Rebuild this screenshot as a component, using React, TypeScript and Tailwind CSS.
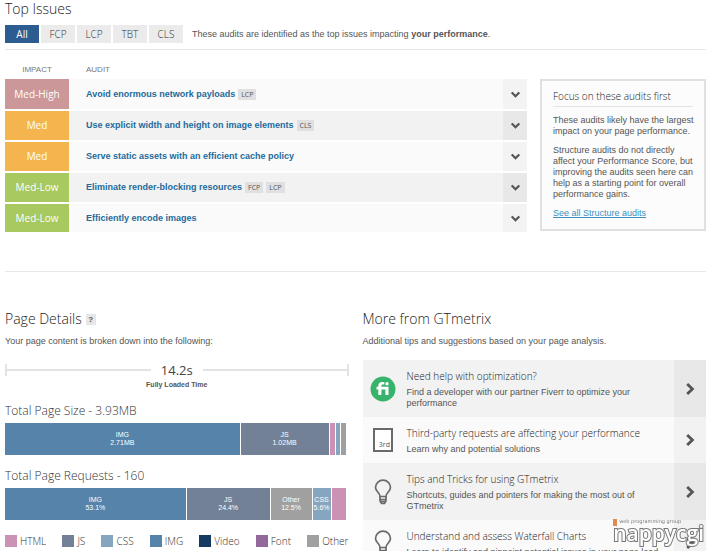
import type { ReactNode } from 'react'
import clsx from 'clsx'

const tabs = ['All', 'FCP', 'LCP', 'TBT', 'CLS']

const audits = [
  { impact: 'Med-High', color: 'bg-[#cb9799]', title: 'Avoid enormous network payloads', tags: ['LCP'] },
  { impact: 'Med', color: 'bg-[#f5b54e]', title: 'Use explicit width and height on image elements', tags: ['CLS'] },
  { impact: 'Med', color: 'bg-[#f5b54e]', title: 'Serve static assets with an efficient cache policy', tags: [] },
  { impact: 'Med-Low', color: 'bg-[#a7c95f]', title: 'Eliminate render-blocking resources', tags: ['FCP', 'LCP'] },
  { impact: 'Med-Low', color: 'bg-[#a7c95f]', title: 'Efficiently encode images', tags: [] },
]

const sizeParts = [
  { name: 'IMG', value: '2.71MB', share: 235, color: 'bg-[#5583a9]' },
  { name: 'JS', value: '1.02MB', share: 88, color: 'bg-[#728196]' },
  { name: '', value: '', share: 5, color: 'bg-[#cc92b6]' },
  { name: '', value: '', share: 4, color: 'bg-[#86a5be]' },
  { name: '', value: '', share: 5, color: 'bg-[#a0a0a0]' },
]

const requestParts = [
  { name: 'IMG', value: '53.1%', share: 181, color: 'bg-[#5583a9]' },
  { name: 'JS', value: '24.4%', share: 83, color: 'bg-[#728196]' },
  { name: 'Other', value: '12.5%', share: 41, color: 'bg-[#a0a0a0]' },
  { name: 'CSS', value: '5.6%', share: 18, color: 'bg-[#86a5be]' },
  { name: '', value: '', share: 14, color: 'bg-[#cc92b6]' },
]

const legend = [
  { name: 'HTML', color: 'bg-[#cc92b6]' },
  { name: 'JS', color: 'bg-[#728196]' },
  { name: 'CSS', color: 'bg-[#86a5be]' },
  { name: 'IMG', color: 'bg-[#5583a9]' },
  { name: 'Video', color: 'bg-[#163b62]' },
  { name: 'Font', color: 'bg-[#93699c]' },
  { name: 'Other', color: 'bg-[#a0a0a0]' },
]

function Chevron({ className }: { className: string }) {
  return (
    <svg viewBox="0 0 12 12" className={className} fill="none" stroke="#555" strokeWidth="2.8">
      <path d="M3.2 1 8.4 6 3.2 11" />
    </svg>
  )
}

function Bulb() {
  return (
    <svg viewBox="0 0 18 26" className="h-[26px] w-[18px]" fill="none" stroke="#6a6a6a" strokeWidth="1.7">
      <path d="M6 17.500C6 13.500 1.500 12.500 1.500 8.500a7.500 7.300 0 0 1 15 0c0 4-4.500 5-4.500 9z" />
      <path d="M6 17.500v4.200L7.500 24.500h3L12 21.700v-4.200" />
      <path d="M6 20.500h6M6.500 22.700h5" />
    </svg>
  )
}

function Fiverr() {
  return (
    <svg viewBox="0 0 26 26" className="h-[26px] w-[26px]">
      <circle cx="13" cy="13" r="12.500" fill="#37b36b" />
      <path
        d="M6.500 10.800h1.800V9.800C8.300 7.400 9.800 6 12.300 6h2v2.600h-1.500c-1 0-1.400.4-1.400 1.200v1h7.100V19h-3.100v-5.500h-4V19H8.300v-5.500H6.500z"
        fill="#fff"
      />
      <circle cx="17" cy="7.700" r="1.700" fill="#fff" />
    </svg>
  )
}

function ThirdParty() {
  return (
    <span className="flex h-6 w-5 items-end justify-end border-2 border-[#6a6a6a] bg-white pr-px pb-px font-['Open_Sans',sans-serif] text-[7px] leading-[9px]">
      3rd
    </span>
  )
}

const tips: { icon: ReactNode; title: string; text: string }[] = [
  { icon: <Fiverr />, title: 'Need help with optimization?', text: 'Find a developer with our partner Fiverr to optimize your performance' },
  { icon: <ThirdParty />, title: 'Third-party requests are affecting your performance', text: 'Learn why and potential solutions' },
  { icon: <Bulb />, title: 'Tips and Tricks for using GTmetrix', text: 'Shortcuts, guides and pointers for making the most out of GTmetrix' },
  { icon: <Bulb />, title: 'Understand and assess Waterfall Charts', text: 'Learn to identify and pinpoint potential issues in your page load' },
]

function Heading({ children }: { children: ReactNode }) {
  return <h2 className="font-['Open_Sans',sans-serif] text-[14px] leading-4 font-light text-[#222]">{children}</h2>
}

function Bar({ title, parts }: { title: string; parts: typeof sizeParts }) {
  return (
    <section>
      <h3 className="mb-1 font-['Open_Sans',sans-serif] text-[12px] leading-4 font-light text-[#333]">{title}</h3>
      <div className="mr-[3px] flex h-8 gap-px">
        {parts.map((part, i) => (
          <div
            key={i}
            className={clsx('flex min-w-0 basis-0 flex-col items-center justify-center text-[7px] leading-[8px] text-white', part.color)}
            style={{ flexGrow: part.share }}
          >
            <span>{part.name}</span>
            <span>{part.value}</span>
          </div>
        ))}
      </div>
    </section>
  )
}

export default function App() {
  return (
    <main className="bg-white pt-px pr-[9px] pl-[5px] font-['Liberation_Sans',Arial,sans-serif] text-[9px] leading-[11px] text-[#555]">
      <Heading>Top Issues</Heading>
      <div className="mt-2 flex items-center border-b border-[#e8e8e4] pb-[6px]">
        <div className="flex gap-[2px]">
          {tabs.map((tab) => (
            <button
              key={tab}
              type="button"
              className={clsx(
                "h-[18px] w-[34px] font-['Open_Sans',sans-serif] text-[10px]",
                tab === 'All' ? 'bg-[#2d5c90] text-white' : 'bg-[#ebebeb] font-light text-[#333]',
              )}
            >
              {tab}
            </button>
          ))}
        </div>
        <p className="ml-[9px]">
          These audits are identified as the top issues impacting <b>your performance</b>.
        </p>
      </div>

      <div className="flex items-start gap-[13px] pt-[14px]">
        <table className="flex-1 border-collapse">
          <thead>
            <tr className="h-[15px] text-left align-top text-[8px] leading-[11px] text-[#777]">
              <th className="w-16 text-center font-normal">IMPACT</th>
              <th className="pl-[17px] font-normal">AUDIT</th>
              <th className="w-6" />
            </tr>
          </thead>
          <tbody>
            {audits.map((audit, i) => (
              <tr key={audit.title} className="h-[31px] border-b-2 border-white last:h-[29px] last:border-b-0">
                <td className={clsx("text-center font-['Open_Sans',sans-serif] text-[10px] text-white", audit.color)}>
                  {audit.impact}
                </td>
                <td className={clsx('pl-[17px]', i % 2 ? 'bg-[#f2f2f2]' : 'bg-[#fafafa]')}>
                  <div className="flex items-center gap-[3px]">
                    <a href="#" className="font-bold text-[#246a9c]">{audit.title}</a>
                    {audit.tags.map((tag) => (
                      <span key={tag} className="bg-[#e0e0e0] px-[3px] font-['Open_Sans',sans-serif] text-[7px] leading-[11px]">
                        {tag}
                      </span>
                    ))}
                  </div>
                </td>
                <td className={i % 2 ? 'bg-[#e8e8e8]' : 'bg-[#f3f3f3]'}>
                  <button type="button" aria-label="Expand audit" className="mx-auto block">
                    <Chevron className="h-[9px] w-[9px] rotate-90" />
                  </button>
                </td>
              </tr>
            ))}
          </tbody>
        </table>
        <aside className="mt-[15px] w-[166px] border-2 border-[#e0e0e0] bg-[#fcfcfc] pt-[9px] pr-2 pb-[10px] pl-[11px]">
          <h3 className="mr-[3px] mb-2 border-b border-[#e4e4e4] pb-1 font-['Open_Sans',sans-serif] text-[10px] leading-3 font-light text-[#222]">
            Focus on these audits first
          </h3>
          <p className="mb-2">These audits likely have the largest impact on your page performance.</p>
          <p className="mb-2">
            Structure audits do not directly affect your Performance Score, but improving the audits seen here can help as a
            starting point for overall performance gains.
          </p>
          <a href="#" className="text-[#3d8fc0] underline">See all Structure audits</a>
        </aside>
      </div>

      <hr className="mt-[39px] border-[#e8e8e8]" />

      <div className="grid grid-cols-2 gap-[14px] pt-[39px]">
        <section>
          <div className="flex items-center gap-1">
            <Heading>Page Details</Heading>
            <button type="button" aria-label="About page details" className="h-[11px] w-[10px] bg-[#e6e6e6] text-[8px] leading-[11px] font-bold">?</button>
          </div>
          <p className="mt-[9px]">Your page content is broken down into the following:</p>
          <div className="mt-[14px] flex items-center">
            <span className="h-3 w-[2px] bg-[#e3e3e3]" />
            <span className="h-[2px] flex-1 bg-[#e3e3e3]" />
            <strong className="px-[10px] font-['Open_Sans',sans-serif] text-[13px] leading-[18px] font-normal text-[#444]">14.2s</strong>
            <span className="h-[2px] flex-1 bg-[#e3e3e3]" />
            <span className="h-3 w-[2px] bg-[#e3e3e3]" />
          </div>
          <p className="mb-[13px] text-center text-[7px] leading-[11px] font-bold">Fully Loaded Time</p>
          <div className="flex flex-col gap-[13px]">
            <Bar title="Total Page Size - 3.93MB" parts={sizeParts} />
            <Bar title="Total Page Requests - 160" parts={requestParts} />
          </div>
          <ul className="mt-[15px] flex justify-between font-['Open_Sans',sans-serif] text-[10px] leading-3 font-light text-[#333]">
            {legend.map((item) => (
              <li key={item.name} className="flex items-center gap-[3px]">
                <span className={clsx('size-3', item.color)} />
                {item.name}
              </li>
            ))}
          </ul>
        </section>

        <section>
          <Heading>More from GTmetrix</Heading>
          <p className="mt-[9px] mb-[13px]">Additional tips and suggestions based on your page analysis.</p>
          <ul>
            {tips.map((tip, i) => (
              <li key={tip.title}>
                <a href="#" className={clsx('flex', i % 2 ? 'bg-[#fafafa]' : 'bg-[#f2f2f2]')}>
                  <span className="flex w-[41px] shrink-0 items-center justify-center">{tip.icon}</span>
                  <span className="flex-1 pt-2 pr-2 pb-2 pl-[3px]">
                    <span className="mb-[3px] block font-['Open_Sans',sans-serif] text-[10px] leading-4 font-light text-[#222]">{tip.title}</span>
                    <span className="block">{tip.text}</span>
                  </span>
                  <span className={clsx('flex w-8 shrink-0 items-center justify-center', i % 2 ? 'bg-[#f2f2f2]' : 'bg-[#e8e8e8]')}>
                    <Chevron className="h-3 w-3" />
                  </span>
                </a>
              </li>
            ))}
          </ul>
        </section>
      </div>

      <div className="fixed right-[11px] bottom-[10px] flex flex-col items-start whitespace-nowrap">
        <div className="flex items-start gap-[2px]">
          <span className="h-[7px] w-1 bg-[#e08a50]" />
          <span className="font-['DejaVu_Sans',sans-serif] text-[5px] leading-[5px] text-[#777]">web programming group</span>
        </div>
        <span className="font-['Open_Sans',sans-serif] text-[21px] leading-[15px] font-semibold text-white [-webkit-text-stroke:2px_#777] [paint-order:stroke_fill]">
          nappycgi
        </span>
      </div>
    </main>
  )
}
